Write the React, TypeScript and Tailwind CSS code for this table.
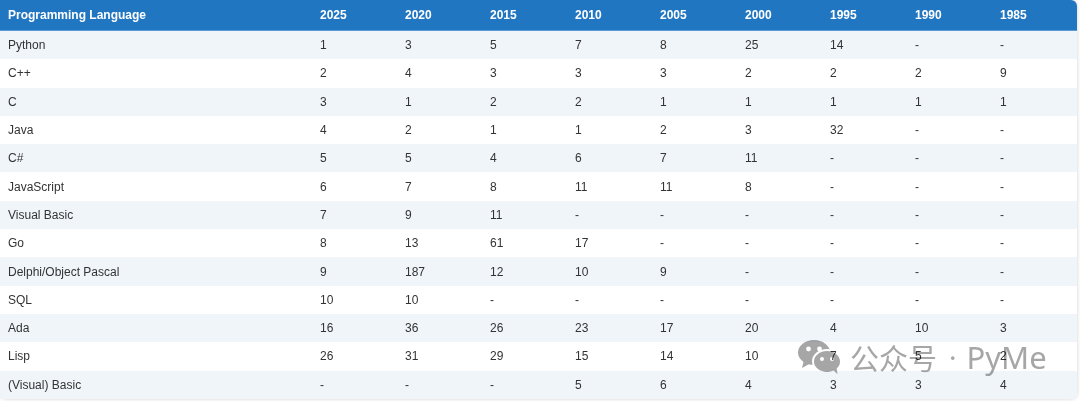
import React from "react";

const years = ["2025", "2020", "2015", "2010", "2005", "2000", "1995", "1990", "1985"];

const rows: [string, string[]][] = [
  ["Python", ["1", "3", "5", "7", "8", "25", "14", "-", "-"]],
  ["C++", ["2", "4", "3", "3", "3", "2", "2", "2", "9"]],
  ["C", ["3", "1", "2", "2", "1", "1", "1", "1", "1"]],
  ["Java", ["4", "2", "1", "1", "2", "3", "32", "-", "-"]],
  ["C#", ["5", "5", "4", "6", "7", "11", "-", "-", "-"]],
  ["JavaScript", ["6", "7", "8", "11", "11", "8", "-", "-", "-"]],
  ["Visual Basic", ["7", "9", "11", "-", "-", "-", "-", "-", "-"]],
  ["Go", ["8", "13", "61", "17", "-", "-", "-", "-", "-"]],
  ["Delphi/Object Pascal", ["9", "187", "12", "10", "9", "-", "-", "-", "-"]],
  ["SQL", ["10", "10", "-", "-", "-", "-", "-", "-", "-"]],
  ["Ada", ["16", "36", "26", "23", "17", "20", "4", "10", "3"]],
  ["Lisp", ["26", "31", "29", "15", "14", "10", "7", "5", "2"]],
  ["(Visual) Basic", ["-", "-", "-", "5", "6", "4", "3", "3", "4"]],
];

function WeChatIcon() {
  return (
    <svg width="44" height="34" viewBox="0 0 44 34">
      <ellipse cx="16" cy="12.5" rx="16" ry="12.5" fill="#a6a6a6" />
      <path d="M6 20 L4 28 L13 23 Z" fill="#a6a6a6" />
      <circle cx="10.5" cy="9" r="2.4" fill="#fff" />
      <circle cx="21.5" cy="9" r="2.4" fill="#fff" />
      <ellipse cx="29" cy="21.5" rx="14" ry="11.5" fill="#a6a6a6" stroke="#fff" strokeWidth="2" />
      <path d="M35 30 L39.5 34 L38.5 27.5 Z" fill="#a6a6a6" />
      <circle cx="24" cy="19" r="2" fill="#fff" />
      <circle cx="34" cy="19" r="2" fill="#fff" />
    </svg>
  );
}

export default function App() {
  return (
    <div
      className="relative w-[1080px] h-[401px] bg-white overflow-hidden"
      style={{ fontFamily: '"Liberation Sans", Arial, sans-serif' }}
    >
      <div className="w-[1077px] rounded-r-[6px] rounded-bl-[6px] overflow-hidden shadow-[0_0_4px_rgba(0,0,0,0.18)]">
        <div className="grid grid-cols-[312px_repeat(9,85px)] h-[31px] items-center bg-[#2176c2] border-b border-[#5b9bd5] text-white text-[12px] font-bold">
          <div className="pl-2">Programming Language</div>
          {years.map((y) => (
            <div key={y} className="pl-2">
              {y}
            </div>
          ))}
        </div>
        {rows.map(([name, vals], i) => (
          <div
            key={name}
            className={`grid grid-cols-[312px_repeat(9,85px)] h-[28.3px] items-center text-[12px] text-[#333] ${
              i % 2 === 0 ? "bg-[#f0f5fa]" : "bg-white"
            }`}
          >
            <div className="pl-2">{name}</div>
            {vals.map((v, j) => (
              <div key={j} className="pl-2">
                {v}
              </div>
            ))}
          </div>
        ))}
      </div>

      <div className="absolute left-[798px] top-[340px] flex items-center mix-blend-multiply pointer-events-none">
        <WeChatIcon />
        <span
          className="ml-[8px] text-[29px] leading-none text-[#a6a6a6]"
          style={{ fontFamily: '"Noto Sans CJK SC", "Noto Sans", sans-serif' }}
        >
          公众号
        </span>
        <span
          className="ml-[12px] text-[28px] leading-none text-[#a6a6a6]"
          style={{ fontFamily: '"Noto Sans", sans-serif' }}
        >
          ·
        </span>
        <span
          className="ml-[10px] text-[31px] leading-none text-[#a6a6a6]"
          style={{ fontFamily: '"Noto Sans", sans-serif' }}
        >
          PyMe
        </span>
      </div>
    </div>
  );
}
